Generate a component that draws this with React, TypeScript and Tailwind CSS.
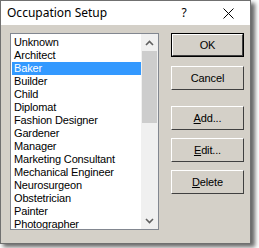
import React from "react";

const items = [
  "Unknown","Architect","Baker","Builder","Child","Diplomat","Fashion Designer","Gardener","Manager","Marketing Consultant","Mechanical Engineer","Neurosurgeon","Obstetrician","Painter","Photographer",
];

const uiFont = { fontFamily: "'Liberation Sans', Arial, sans-serif" } as React.CSSProperties;

function Btn({ children, def }: { children: React.ReactNode; def?: boolean }) {
  return (
    <div className={"h-[24px] w-[73px] " + (def ? "border border-black" : "")}>
      <div className="h-full w-full border-t border-l border-t-white border-l-white border-r border-b border-r-[#404040] border-b-[#404040] bg-[#d4d0c8] flex items-center justify-center text-[11px] tracking-[-0.15px] text-black" style={uiFont}>
        {children}
      </div>
    </div>
  );
}

export default function App() {
  return (
    <div className="w-[259px] h-[248px] bg-white relative">
      <div className="absolute left-[3px] top-[3px] w-[252px] h-[244px] bg-[#666] blur-[2px]" />
      <div className="relative w-[251px] h-[244px] border border-[#707070] bg-[#d4d0c8] flex flex-col">
        <div className="h-[24px] bg-white flex items-center pl-[6px] text-[12px] text-black" style={{ fontFamily: "'Noto Sans', sans-serif" }}>
          <span className="flex-1">Occupation Setup</span>
          <span className="w-[44px] text-center">?</span>
          <span className="w-[44px] flex justify-center">
            <svg width="11" height="11" viewBox="0 0 11 11"><path d="M0.5 0.5L10.5 10.5M10.5 0.5L0.5 10.5" stroke="#000" strokeWidth="1" /></svg>
          </span>
        </div>
        <div className="flex pl-[9px] pt-[8px] gap-[12px]">
          <div className="w-[149px] h-[197px] border border-[#828790] bg-white flex overflow-hidden">
            <div className="flex-1 pt-[2px] pl-[1px] text-[11px] leading-[13px] tracking-[-0.15px] text-black" style={uiFont}>
              {items.map((it) => (
                <div key={it} className={"h-[13px] pl-[2px] whitespace-nowrap " + (it === "Baker" ? "bg-[#3399ff] text-white" : "")}>{it}</div>
              ))}
            </div>
            <div className="w-[17px] bg-[#f0f0f0] flex flex-col">
              <div className="h-[17px] flex items-center justify-center">
                <svg width="9" height="6" viewBox="0 0 9 6"><path d="M1 5L4.5 1.5L8 5" fill="none" stroke="#606060" strokeWidth="1.6" /></svg>
              </div>
              <div className="h-[72px] mx-[1px] bg-[#cdcdcd]" />
              <div className="flex-1" />
              <div className="h-[17px] flex items-center justify-center">
                <svg width="9" height="6" viewBox="0 0 9 6"><path d="M1 1L4.5 4.5L8 1" fill="none" stroke="#606060" strokeWidth="1.6" /></svg>
              </div>
            </div>
          </div>
          <div className="flex flex-col">
            <Btn def>OK</Btn>
            <div className="h-[9px]" />
            <Btn>Cancel</Btn>
            <div className="h-[16px]" />
            <Btn><span><u>A</u>dd...</span></Btn>
            <div className="h-[8px]" />
            <Btn><span><u>E</u>dit...</span></Btn>
            <div className="h-[8px]" />
            <Btn><span><u>D</u>elete</span></Btn>
          </div>
        </div>
      </div>
    </div>
  );
}
